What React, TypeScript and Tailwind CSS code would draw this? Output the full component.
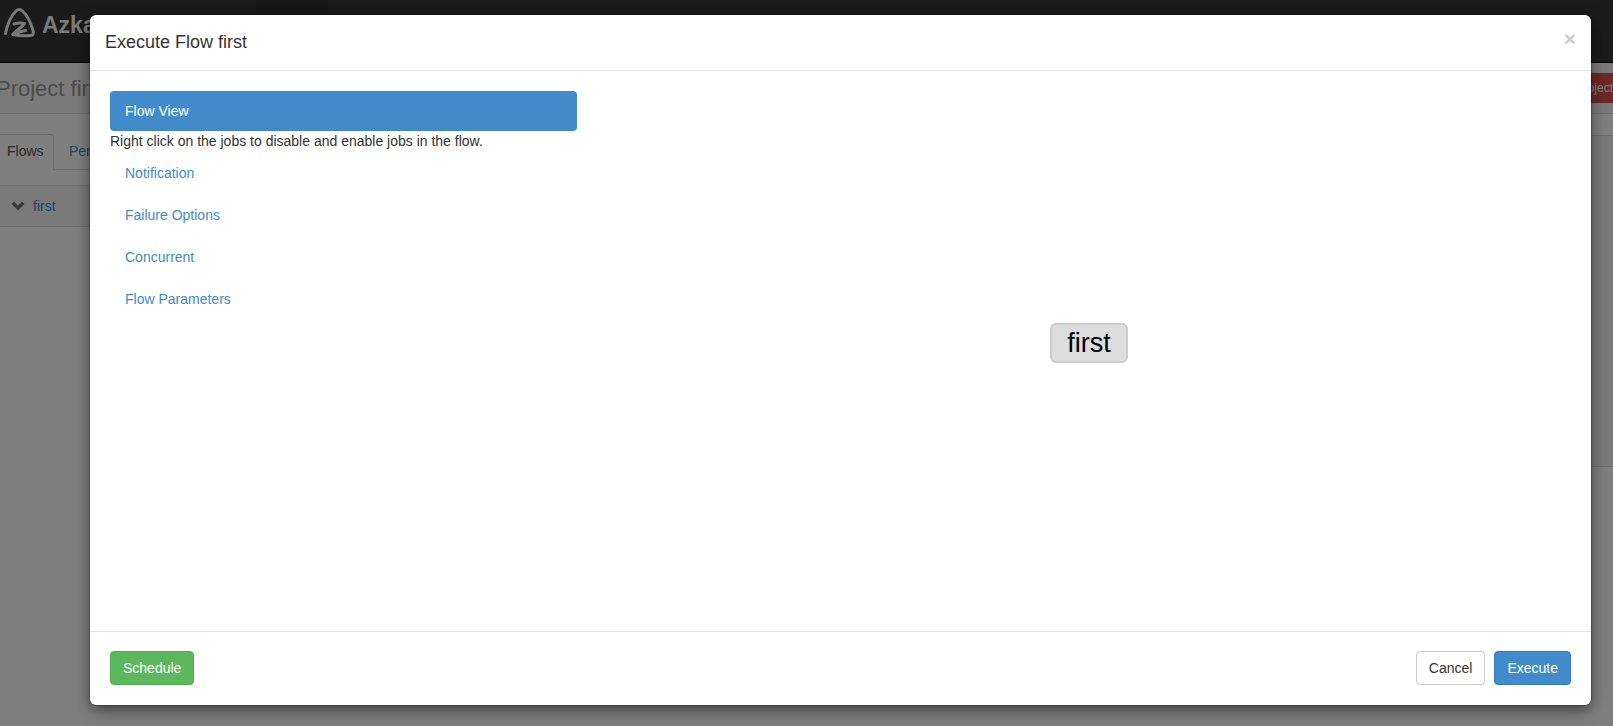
import { useState } from "react";

const options = ["Flow View", "Notification", "Failure Options", "Concurrent", "Flow Parameters"];

function Logo() {
  return (
    <svg
      viewBox="0 0 32 32"
      className="h-8 w-8 shrink-0"
      fill="none"
      stroke="#f5f5f5"
      strokeWidth="3"
      strokeLinecap="round"
      strokeLinejoin="round"
      aria-hidden="true"
    >
      <path d="M2.5 26.5C4 17.5 8.5 8 13 4C15.2 2 17.3 2 19.5 4C24.5 8.5 28 16.5 30 23.5C31 27 29.8 28.5 27 28.5C21 29 15 28.8 10 27.5" />
      <path d="M11 17C14 16 18.5 15.6 21.5 16.5C19.5 20 13.5 23 10 27.5C13.5 25.5 18 24.5 22.5 23.5" />
    </svg>
  );
}

function Chevron() {
  return (
    <svg viewBox="0 0 14 10" className="h-[10px] w-[14px]" fill="#777777" aria-hidden="true">
      <path d="M0.5 3L3 0.5L7 4.5L11 0.5L13.5 3L7 9.5Z" />
    </svg>
  );
}

function Navbar() {
  return (
    <nav className="flex h-[63px] items-stretch border-b border-black bg-[#363636]">
      <a href="#" className="flex w-64 items-start gap-[7px] pl-[3px] pt-[7px] text-[23px] font-bold leading-9 text-[#f5f5f5]">
        <Logo />
        <span>Azkaban</span>
      </a>
      <div className="w-[72px] bg-[#2e2e2e]" />
    </nav>
  );
}

function ProjectPage() {
  return (
    <div aria-hidden="true">
      <Navbar />
      <header className="flex h-[51px] items-center justify-between border-b border-[#dddddd] bg-[#f5f5f5]">
        <h1 className="-ml-1 text-[22px] text-[#999999]">Project first</h1>
        <button type="button" tabIndex={-1} className="-mr-2 h-[30px] rounded-sm bg-[#d9534f] px-2 text-xs text-white">
          Delete Project
        </button>
      </header>
      <div className="flex">
        <div className="min-w-0 flex-1">
          <div className="flex h-14 items-end border-b border-[#dddddd]">
            <a
              href="#"
              tabIndex={-1}
              className="-mb-px flex h-9 w-[54px] items-center rounded-tr border-r border-t border-[#dddddd] bg-white pb-1 pl-[7px] text-sm text-[#555555]"
            >
              Flows
            </a>
            <a href="#" tabIndex={-1} className="flex h-9 items-center px-[15px] text-sm text-[#428bca]">
              Permissions
            </a>
          </div>
          <div className="mt-[15px] flex h-[42px] items-center gap-2 border-y border-[#dddddd] bg-[#f5f5f5] pl-[11px] text-sm text-[#428bca]">
            <Chevron />
            <a href="#" tabIndex={-1}>first</a>
          </div>
        </div>
        <aside className="mt-[21px] h-[332px] w-80 border-y border-[#dddddd] bg-[#f5f5f5]" />
      </div>
    </div>
  );
}

function ExecuteDialog() {
  const [active, setActive] = useState("Flow View");

  return (
    <div
      role="dialog"
      aria-modal="true"
      aria-labelledby="execute-title"
      className="flex flex-1 flex-col rounded-md bg-white text-sm leading-5 text-[#333333] shadow-[0_5px_15px_rgba(0,0,0,0.5)] outline outline-black/20"
    >
      <header className="flex items-start justify-between border-b border-[#e5e5e5] px-[15px] pb-[15px] pt-[15px]">
        <h4 id="execute-title" className="text-lg leading-[25px]">Execute Flow first</h4>
        <button type="button" aria-label="Close" className="text-[21px] font-bold leading-[18px] text-[#cccccc]">
          ×
        </button>
      </header>

      <div className="flex flex-1 gap-[30px] p-5">
        <ul className="flex w-[467px] shrink-0 flex-col gap-[2px]">
          {options.map((option) => (
            <li key={option}>
              <button
                type="button"
                onClick={() => setActive(option)}
                className={
                  option === active
                    ? "block h-10 w-full rounded bg-[#428bca] px-[15px] text-left text-white"
                    : "block h-10 w-full rounded px-[15px] text-left text-[#428bca]"
                }
              >
                {option}
              </button>
              {option === "Flow View" && active === option && (
                <p>Right click on the jobs to disable and enable jobs in the flow.</p>
              )}
            </li>
          ))}
        </ul>
        <div className="flex flex-1 items-center justify-center">
          <button
            type="button"
            className="mb-4 h-10 w-[78px] rounded-md border-2 border-[#cccccc] bg-[#dddddd] text-[27px] leading-9 text-black"
          >
            first
          </button>
        </div>
      </div>

      <footer className="flex items-center gap-[9px] border-t border-[#e5e5e5] px-5 pb-5 pt-[19px]">
        <button type="button" className="mr-auto h-[34px] rounded border border-[#4cae4c] bg-[#5cb85c] px-3 text-white">
          Schedule
        </button>
        <button type="button" className="h-[34px] rounded border border-[#cccccc] bg-white px-3">
          Cancel
        </button>
        <button type="button" className="h-[34px] rounded border border-[#357ebd] bg-[#428bca] px-3 text-white">
          Execute
        </button>
      </footer>
    </div>
  );
}

export default function App() {
  return (
    <div className="relative min-h-screen overflow-hidden bg-white font-['Liberation_Sans',Arial,sans-serif]">
      <ProjectPage />
      <div className="absolute inset-0 flex bg-black/50 pb-[21px] pl-[90px] pr-[22px] pt-[15px]">
        <ExecuteDialog />
      </div>
    </div>
  );
}
